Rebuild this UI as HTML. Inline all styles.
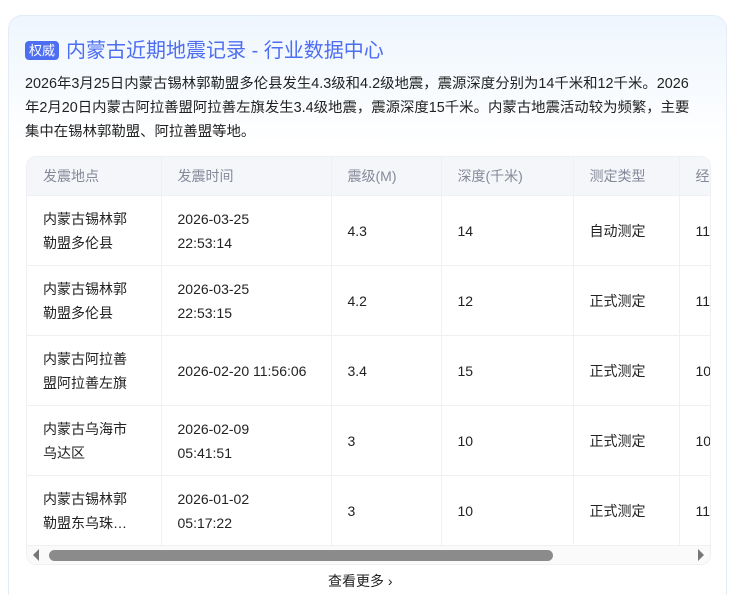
<!DOCTYPE html>
<html><head><meta charset="utf-8"><style>
html,body{margin:0;width:740px;height:595px;overflow:hidden}
body{background:#fff;font-family:"Liberation Sans","Noto Sans CJK SC",sans-serif;position:relative}
.card{position:absolute;left:8px;top:15px;width:717px;height:580px;border:1px solid #e3ecf8;border-bottom:none;border-radius:14px 14px 0 0;background:linear-gradient(180deg,#eef6fe 0,#fff 130px)}
.title{position:absolute;left:16px;top:18px;font-size:20px;color:#4e6ef2;white-space:nowrap}
.tag{display:inline-block;background:#4e6ef2;color:#fff;font-size:13px;border-radius:4px;padding:1px 4px;margin-right:7px;vertical-align:2px;line-height:17px}
.desc{position:absolute;left:16px;top:56px;width:700px;font-size:14.4px;line-height:24px;color:#222;white-space:nowrap}
.tbl{position:absolute;left:17px;top:140px;width:683px;height:407px;border:1px solid #eef0f4;border-radius:10px;overflow:hidden;background:#fff}
table{border-collapse:collapse;font-size:14px;color:#222;table-layout:fixed;width:713px}
td,th{padding:0 16px;border-right:1px solid #eef0f4;border-bottom:1px solid #eef0f4;text-align:left;line-height:24px;white-space:nowrap;overflow:hidden}
th{background:#f5f6fa;color:#858a99;font-weight:normal;height:38px}
td{height:69px}
.sb{position:absolute;left:0;top:389px;width:683px;height:18px;background:#fafafa}
.thumb{position:absolute;left:22px;top:4px;width:504px;height:11px;border-radius:6px;background:#8b8b8b}
.more{position:absolute;left:328px;top:571px;font-size:14px;color:#222}
</style></head><body>
<div class="card">
<div class="title"><span class="tag">权威</span>内蒙古近期地震记录 - 行业数据中心</div>
<div class="desc">2026年3月25日内蒙古锡林郭勒盟多伦县发生4.3级和4.2级地震，震源深度分别为14千米和12千米。2026<br>年2月20日内蒙古阿拉善盟阿拉善左旗发生3.4级地震，震源深度15千米。内蒙古地震活动较为频繁，主要<br>集中在锡林郭勒盟、阿拉善盟等地。</div>
<div class="tbl">
<table>
<colgroup><col style="width:134px"><col style="width:170px"><col style="width:110px"><col style="width:132px"><col style="width:106px"><col style="width:61px"></colgroup>
<tr><th>发震地点</th><th>发震时间</th><th>震级(M)</th><th>深度(千米)</th><th>测定类型</th><th>经</th></tr>
<tr><td>内蒙古锡林郭<br>勒盟多伦县</td><td>2026-03-25<br>22:53:14</td><td>4.3</td><td>14</td><td>自动测定</td><td>11</td></tr>
<tr><td>内蒙古锡林郭<br>勒盟多伦县</td><td>2026-03-25<br>22:53:15</td><td>4.2</td><td>12</td><td>正式测定</td><td>11</td></tr>
<tr><td>内蒙古阿拉善<br>盟阿拉善左旗</td><td>2026-02-20 11:56:06</td><td>3.4</td><td>15</td><td>正式测定</td><td>10</td></tr>
<tr><td>内蒙古乌海市<br>乌达区</td><td>2026-02-09<br>05:41:51</td><td>3</td><td>10</td><td>正式测定</td><td>10</td></tr>
<tr><td>内蒙古锡林郭<br>勒盟东乌珠…</td><td>2026-01-02<br>05:17:22</td><td>3</td><td>10</td><td>正式测定</td><td>11</td></tr>
</table>
<div class="sb"><span style="position:absolute;left:6px;top:3px;width:0;height:0;border-top:6px solid transparent;border-bottom:6px solid transparent;border-right:6px solid #777"></span><div class="thumb"></div><span style="position:absolute;right:6px;top:3px;width:0;height:0;border-top:6px solid transparent;border-bottom:6px solid transparent;border-left:6px solid #777"></span></div>
</div>
</div>
<div class="more">查看更多 ›</div>
</body></html>
